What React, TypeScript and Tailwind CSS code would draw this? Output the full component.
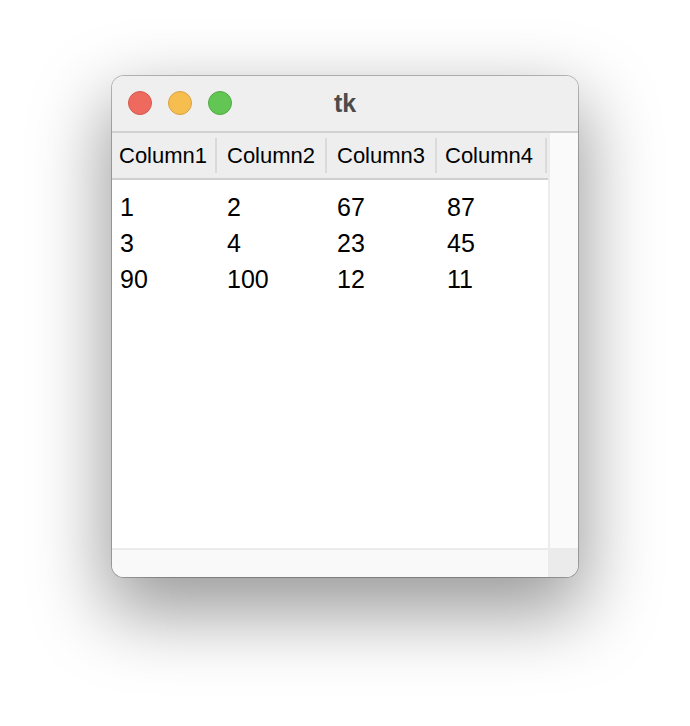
const font = { fontFamily: '"Liberation Sans", Arial, sans-serif' };

const columns = [
  { name: 'Column1', w: 'w-[105px]', hp: 'pl-[7px]', bp: 'pl-[8px]' },
  { name: 'Column2', w: 'w-[110px]', hp: 'pl-[10px]', bp: 'pl-[10px]' },
  { name: 'Column3', w: 'w-[110px]', hp: 'pl-[10px]', bp: 'pl-[10px]' },
  { name: 'Column4', w: 'w-[110px]', hp: 'pl-[8px]', bp: 'pl-[10px]' },
];

const rows = [
  ['1', '2', '67', '87'],
  ['3', '4', '23', '45'],
  ['90', '100', '12', '11'],
];

function TrafficLight({ color, border }: { color: string; border: string }) {
  return <div className={`w-[24px] h-[24px] rounded-full border ${color} ${border}`} />;
}

export default function App() {
  return (
    <div className="w-[690px] h-[726px] bg-white pt-[76px] pl-[112px]" style={font}>
      <div className="w-[466px] h-[501px] flex flex-col rounded-[12px] overflow-hidden bg-white ring-1 ring-black/25 shadow-[0_30px_75px_6px_rgba(0,0,0,0.4)]">
        {/* title bar */}
        <div className="relative h-[57px] shrink-0 bg-[#efefef] border-b-2 border-[#d2d2d2] flex items-center">
          <div className="flex gap-[16px] pl-[16px] pb-[1px]">
            <TrafficLight color="bg-[#ee6a5f]" border="border-[#d5574c]" />
            <TrafficLight color="bg-[#f6be4f]" border="border-[#d9a13f]" />
            <TrafficLight color="bg-[#62c554]" border="border-[#4fab43]" />
          </div>
          <div className="absolute inset-0 flex items-center justify-center pt-[1px] text-[25px] font-bold text-[#4b4b4b]">
            tk
          </div>
        </div>

        <div className="flex flex-1 min-h-0">
          {/* table */}
          <div className="w-[436px] flex flex-col">
            <div className="h-[47px] shrink-0 flex bg-[#eeeeee] border-b-2 border-[#cfcfcf]">
              {columns.map((c) => (
                <div key={c.name} className={`${c.w} flex items-center`}>
                  <div className={`flex-1 ${c.hp} text-[22px] text-black leading-none`}>{c.name}</div>
                  <div className="w-[2px] h-[35px] bg-[#dadada]" />
                </div>
              ))}
            </div>
            <div className="flex-1 pt-[9px] bg-white">
              {rows.map((r, i) => (
                <div key={i} className="h-[36px] flex items-center">
                  {r.map((v, j) => (
                    <div key={j} className={`${columns[j].w} ${columns[j].bp} text-[25px] text-black leading-none`}>
                      {v}
                    </div>
                  ))}
                </div>
              ))}
            </div>
          </div>
          {/* vertical scrollbar */}
          <div className="w-[30px] bg-[#fafafa] border-l-2 border-[#ececec]" />
        </div>

        {/* horizontal scrollbar */}
        <div className="h-[29px] shrink-0 flex border-t-2 border-[#ebebeb]">
          <div className="w-[436px] bg-[#f9f9f9]" />
          <div className="flex-1 bg-[#ebebeb]" />
        </div>
      </div>
    </div>
  );
}
